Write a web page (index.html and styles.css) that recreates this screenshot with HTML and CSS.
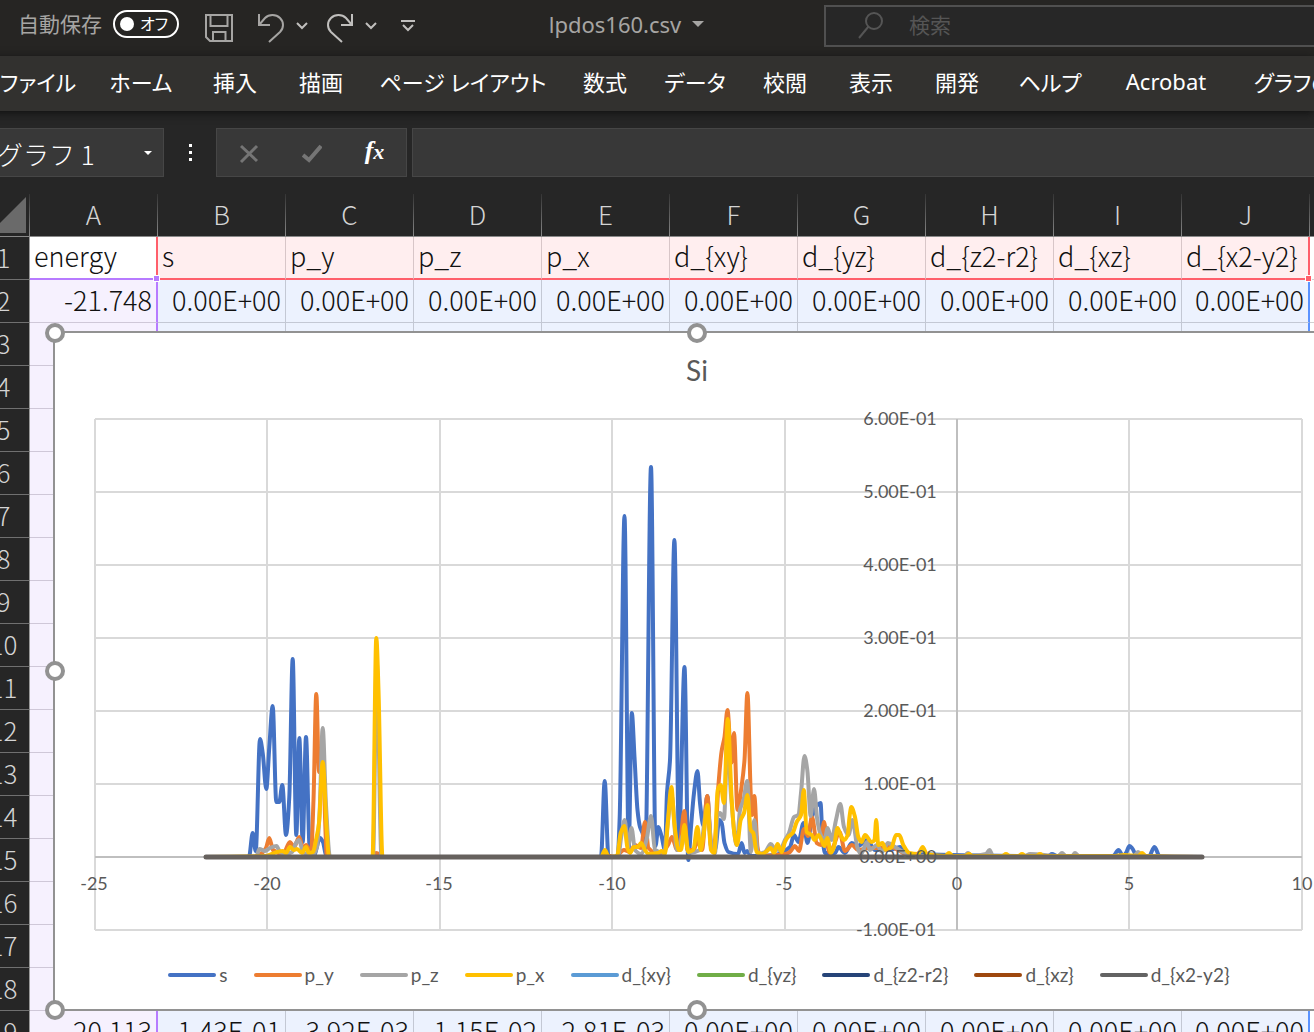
FILE: index.html
```
<!DOCTYPE html>
<html lang="ja">
<head>
    <meta charset="UTF-8">
    <meta name="viewport" content="width=device-width, initial-scale=1.0">
    <title>lpdos160.csv</title>
    <link rel="stylesheet" href="styles.css">
</head>
<body>
    <div class="window">
        <header class="titlebar">
            <div class="quick-access">
                <label class="autosave-label" for="autosave">自動保存</label>
                <button class="toggle" id="autosave" role="switch" aria-checked="false"><span class="knob"></span>オフ</button>
                <button class="icon-btn save" aria-label="上書き保存">
                    <svg width="30" height="30" viewBox="0 0 30 30"><path d="M2 2H28V28H6L2 24ZM6.500 2V13H23.500V2M9 28V19H21.500V28"/></svg>
                </button>
                <button class="icon-btn undo" aria-label="元に戻す">
                    <svg width="28" height="30" viewBox="0 0 28 30"><path d="M2 1V12H13M2 12L8 5C12 1 19 1 23 5C27 9 27 15 23 19L12 29"/></svg>
                </button>
                <button class="icon-btn chevron" aria-label="元に戻す一覧">
                    <svg width="12" height="8" viewBox="0 0 12 8"><path d="M1 1L6 6L11 1"/></svg>
                </button>
                <button class="icon-btn redo" aria-label="やり直し">
                    <svg width="28" height="30" viewBox="0 0 28 30"><path d="M26 1V12H15M26 12L20 5C16 1 9 1 5 5C1 9 1 15 5 19L16 29"/></svg>
                </button>
                <button class="icon-btn chevron" aria-label="やり直し一覧">
                    <svg width="12" height="8" viewBox="0 0 12 8"><path d="M1 1L6 6L11 1"/></svg>
                </button>
                <button class="icon-btn customize" aria-label="カスタマイズ">
                    <svg width="14" height="12" viewBox="0 0 14 12"><path d="M0 1H14M2 5L7 10L12 5"/></svg>
                </button>
            </div>
            <button class="doc-title">lpdos160.csv <span class="caret"></span></button>
            <div class="search">
                <svg width="28" height="30" viewBox="0 0 28 30"><circle cx="17" cy="10" r="8"/><path d="M11.500 15.500L2 27"/></svg>
                <input type="text" placeholder="検索" aria-label="検索">
            </div>
        </header>

        <nav class="tabs">
            <button class="file-tab">ファイル</button>
            <button>ホーム</button>
            <button>挿入</button>
            <button>描画</button>
            <button>ページ レイアウト</button>
            <button>数式</button>
            <button>データ</button>
            <button>校閲</button>
            <button>表示</button>
            <button>開発</button>
            <button>ヘルプ</button>
            <button>Acrobat</button>
            <button class="context-tab">グラフのデザイン</button>
        </nav>

        <div class="formula-bar">
            <div class="name-box">
                <input type="text" value="グラフ 1" aria-label="名前ボックス">
                <span class="caret small"></span>
            </div>
            <div class="dots"><span></span><span></span><span></span></div>
            <div class="formula-buttons">
                <button aria-label="キャンセル"><svg width="20" height="20" viewBox="0 0 20 20"><path d="M2 2L18 17M18 2L2 18"/></svg></button>
                <button aria-label="入力"><svg width="20" height="20" viewBox="0 0 20 20"><path class="check" d="M1 11L7 16L19 2"/></svg></button>
                <button class="fx" aria-label="関数の挿入">f<span>x</span></button>
            </div>
            <input class="formula-input" type="text" aria-label="数式バー">
        </div>

        <main class="sheet">
            <table>
                <colgroup>
                    <col class="row-col">
                    <col span="11">
                </colgroup>
                <thead>
                    <tr>
                        <th class="corner"><svg width="36" height="36" viewBox="0 0 36 36"><path d="M36 0V36H0Z"/></svg></th>
                        <th>A</th><th>B</th><th>C</th><th>D</th><th>E</th><th>F</th><th>G</th><th>H</th><th>I</th><th>J</th><th></th>
                    </tr>
                </thead>
                <tbody>
                    <tr class="names">
                        <th>1</th>
                        <td class="first">energy<span class="grip purple"></span></td>
                        <td>s</td><td>p_y</td><td>p_z</td><td>p_x</td><td>d_{xy}</td><td>d_{yz}</td><td>d_{z2-r2}</td><td>d_{xz}</td>
                        <td class="last">d_{x2-y2}<span class="grip red"></span></td>
                        <td class="plain"></td>
                    </tr>
                    <tr>
                        <th>2</th>
                        <td class="first">-21.748</td>
                        <td>0.00E+00</td><td>0.00E+00</td><td>0.00E+00</td><td>0.00E+00</td><td>0.00E+00</td><td>0.00E+00</td><td>0.00E+00</td><td>0.00E+00</td>
                        <td class="last">0.00E+00</td>
                        <td class="plain"></td>
                    </tr>
                    <tr>
                        <th>3</th>
                        <td class="first"></td>
                        <td></td><td></td><td></td><td></td><td></td><td></td><td></td><td></td>
                        <td class="last"></td>
                        <td class="plain"></td>
                    </tr>
                    <tr><th>4</th><td class="first"></td><td colspan="10"></td></tr>
                    <tr><th>5</th><td class="first"></td><td colspan="10"></td></tr>
                    <tr><th>6</th><td class="first"></td><td colspan="10"></td></tr>
                    <tr><th>7</th><td class="first"></td><td colspan="10"></td></tr>
                    <tr><th>8</th><td class="first"></td><td colspan="10"></td></tr>
                    <tr><th>9</th><td class="first"></td><td colspan="10"></td></tr>
                    <tr><th>10</th><td class="first"></td><td colspan="10"></td></tr>
                    <tr><th>11</th><td class="first"></td><td colspan="10"></td></tr>
                    <tr><th>12</th><td class="first"></td><td colspan="10"></td></tr>
                    <tr><th>13</th><td class="first"></td><td colspan="10"></td></tr>
                    <tr><th>14</th><td class="first"></td><td colspan="10"></td></tr>
                    <tr><th>15</th><td class="first"></td><td colspan="10"></td></tr>
                    <tr><th>16</th><td class="first"></td><td colspan="10"></td></tr>
                    <tr><th>17</th><td class="first"></td><td colspan="10"></td></tr>
                    <tr><th>18</th><td class="first"></td><td colspan="10"></td></tr>
                    <tr>
                        <th>19</th>
                        <td class="first">-20.113</td>
                        <td>1.43E-01</td><td>3.92E-03</td><td>1.15E-02</td><td>2.81E-03</td><td>0.00E+00</td><td>0.00E+00</td><td>0.00E+00</td><td>0.00E+00</td>
                        <td class="last">0.00E+00</td>
                        <td class="plain"></td>
                    </tr>
                </tbody>
            </table>

            <section class="chart">
                <h2>Si</h2>
                <svg class="plot" width="1282" height="560" viewBox="56 392 1282 560">
                    <path class="gridlines" d="M95 419H1302M95 492H1302M95 565H1302M95 638H1302M95 711H1302M95 784H1302M95 930H1302M95 419V930M267 419V930M440 419V930M612 419V930M785 419V930M1129 419V930M1302 419V930"/>
                    <path class="axes" d="M95 857H1302M957 419V930"/>

                    <!-- curves, smoothed by script.js -->
                    <path class="series s" data-points="206,857 249,857 252.7,833 255.7,851 260,739 262.7,753 266.3,789 269.3,747 272.7,706 276.3,802 279.3,802 282.3,785 286,835 289.3,797 292.7,659 296.3,835 299.3,738 302.7,842 306,737 309.7,851 314,855 320,838 323,842 326,855 330,857 601,857 604.7,781 608.5,857 617.5,857 619.7,817 624.5,516 628.7,848 631.8,713 634.5,757 637.5,810 640,827 642.5,833 645.5,848 651,467 655.5,846 658.3,827 661.5,836 665,850 667,793 670,760 674.4,540 679,842 684.5,667 688.3,860 691,827 694,793 697.5,771 700,803 703.5,826 707.3,796 711,847 715,850 719.3,820 721.7,823 724.5,843 728.5,852 738,854 741.7,843 744.5,853 747.3,851 751,856 775,855 790,847 794,835 798.5,842 803.5,823 807.5,843 812,817 817.3,805 820.5,803 822.5,837 825,853 835,853 838.5,847 845,853 851.7,843 858,846 867,840 875,850 890,850 900,847 908,854 1048,856 1052,854 1057,856 1113,856 1118.5,850 1123,856 1126,853 1129.5,846 1132,848 1137,856 1149,856 1154.5,847 1160,857 1200,857"/>
                    <path class="series p-y" data-points="206,857 255,857 263,852 266,848 269.3,838 273,850 283,854 290,842 294,847 299.3,837 303,849 306,845 311,853 313.5,800 316.3,694 319,772 322.7,765 327,857 372,857 376,853 384,857 601,857 604,855 615,857 624,850 630,852 635,845 641,848 645,822 648.5,848 660,855 668,845 672,837 677,850 680,843 684.3,811 687.5,850 694,850 697,840 702,850 707.3,796 711.5,848 715,840 718.3,787 721.5,752 724.5,737 727.5,710 731.5,763 734,733 737.5,810 741.5,787 744.5,760 747.4,693 750.7,793 752,815 754.3,796 757.5,847 760,856 785,854 790,852 795,846 799,851 804,829 808,836 812,817 816.7,843 821,845 824,822 827,843 830,853 834,845 839.5,832 845,851 852,845 858,850 870,848 880,848 888,846 898,850 910,856 1200,857"/>
                    <path class="series p-z" data-points="206,857 256,857 259.5,849 265,851 270,848 276.5,846 280,852 286,854 292,852 296,843 299,840 303,852 312,856 317,847 319.5,815 322.7,728 326,805 330,857 373,857 376.7,662 381.5,857 618,857 621.5,835 624.7,820 628,847 631.5,828 635,850 641,854 646.5,840 651,816 655,850 664,853 667,830 671.7,796 677,850 684.3,833 689,853 700,850 707.3,807 711.5,845 715,853 717.3,817 720,813 724,819 727.5,735 731,795 736.7,845 740,810 743.5,800 747.2,781 750.9,852 754.3,820 758,854 765,852 770.7,844 775,849 780,850 785,840 789,833 794,817 798.3,815 801,793 804.5,756 807.3,770 810.7,816 814,789 817.3,820 820.7,835 824.5,840 827.7,828 831.5,840 836,820 840.3,804 844,827 848.5,835 852.5,820 857.5,848 861,854 867,842 870,850 877,845 882,852 888,843 895,847 903,852 920,856 964,856 968,853 972,856 986,854 989.5,850 993,856 1025,856 1030,854 1058,856 1062,853 1066,856 1072,856 1075,853 1079,856 1134,856 1138,852 1143,856 1200,857"/>
                    <path class="series p-x" data-points="206,857 265,856 272,854 277,852 283,851 286,853 290,847 294,850 297,849 302,853 306,847 309,853 313,852 316,840 319,823 322.7,762 326.7,830 329,857 372.5,857 376.3,638 378.5,690 382.5,857 601,857 605,850 608.5,857 617,856 620.7,833 624.3,826 627.5,848 630,853 634,847 638,847 641,843 645,850 648.5,854 658,853 661.7,851 665,854 668,820 671.4,787 674.3,823 678.7,850 681,850 684.4,825 688.3,852 693.3,850 697.4,827 700.7,850 703.3,837 707.4,805 711,850 714.3,853 717.7,790 720.7,785 724,803 727.7,719 731.7,800 734.3,833 737,845 740.7,820 744,813 747.4,795 750.7,830 753.3,833 756.7,852 762,854 767,851 770.7,848 774,853 777.5,844 781.7,852 785,842 788,837 792.7,833 796.7,822 801,815 803.8,790 806.7,832 811.7,835 814.5,840 818.3,835 821.5,840 824.3,846 827.3,838 831,853 834,847 837.5,828 840.5,835 844,840 847.7,835 849.5,817 851.3,807 855,817 858.3,837 861.5,842 865,835 871.7,842 874.5,840 876.2,820 878.3,845 882.5,843 886,850 891.7,847 896,835 899.3,835 903.3,845 909.3,853 918,854 922.7,847 926.7,854 945,856 949,853 953,856 965,856 969,854 973,856 1002,856 1006,854 1010,856 1018,856 1022,854 1026,856 1036,856 1040,854 1044,856 1115,856 1124,855 1138,856 1142,853 1146,856 1200,857"/>
                    <!-- the five d series all sit on zero, the last one covers the rest -->
                    <path class="series d-x2y2" data-points="206,857 1202,857"/>

                    <g class="labels">
                        <text x="900" y="425">6.00E-01</text>
                        <text x="900" y="498">5.00E-01</text>
                        <text x="900" y="571">4.00E-01</text>
                        <text x="900" y="644">3.00E-01</text>
                        <text x="900" y="717">2.00E-01</text>
                        <text x="900" y="790">1.00E-01</text>
                        <text x="898" y="863">0.00E+00</text>
                        <text x="896" y="936">-1.00E-01</text>
                        <text x="94" y="890">-25</text>
                        <text x="267" y="890">-20</text>
                        <text x="439" y="890">-15</text>
                        <text x="612" y="890">-10</text>
                        <text x="784" y="890">-5</text>
                        <text x="957" y="890">0</text>
                        <text x="1129" y="890">5</text>
                        <text x="1302" y="890">10</text>
                    </g>
                </svg>
                <ul class="legend">
                    <li class="s">s</li>
                    <li class="p-y">p_y</li>
                    <li class="p-z">p_z</li>
                    <li class="p-x">p_x</li>
                    <li class="d-xy">d_{xy}</li>
                    <li class="d-yz">d_{yz}</li>
                    <li class="d-z2r2">d_{z2-r2}</li>
                    <li class="d-xz">d_{xz}</li>
                    <li class="d-x2y2">d_{x2-y2}</li>
                </ul>
                <span class="handle top left"></span>
                <span class="handle top center"></span>
                <span class="handle middle left"></span>
                <span class="handle bottom left"></span>
                <span class="handle bottom center"></span>
            </section>
        </main>
    </div>
    <script src="script.js"></script>
</body>
</html>
```

FILE: styles.css
```
* {
    box-sizing: border-box;
}
body {
    margin: 0;
    height: 100vh;
    overflow: hidden;
    background: #262626;
    font-family: "Noto Sans", "Noto Sans CJK JP", sans-serif;
}
button, input {
    font: inherit;
    color: inherit;
    background: none;
    border: none;
    padding: 0;
    margin: 0;
    outline: none;
}
/* the window is pushed a little past the left edge of the screen */
.window {
    margin-left: -22px;
}

/* title bar */
.titlebar {
    display: flex;
    height: 56px;
    padding-left: 40px;
    background: #262523;
    color: #a6a5a3;
    font-size: 21px;
}
.quick-access {
    display: flex;
    align-items: center;
    height: 52px;
}
.autosave-label {
    line-height: 28px;
    margin: 0 11px 4px 0;
}
.toggle {
    display: flex;
    align-items: center;
    justify-content: space-between;
    width: 66px;
    height: 28px;
    margin-bottom: 4px;
    padding: 0 9px 0 5px;
    border: 2px solid #fff;
    border-radius: 14px;
    color: #fff;
    font-size: 16px;
    line-height: 20px;
    font-feature-settings: "palt";
}
.knob {
    width: 14px;
    height: 14px;
    border-radius: 50%;
    background: #fff;
}
.icon-btn {
    display: flex;
}
.icon-btn svg {
    fill: none;
    stroke: #a6a5a3;
    stroke-width: 2;
}
.icon-btn.chevron svg, .icon-btn.customize svg, .icon-btn.redo svg {
    stroke: #c0bfbd;
}
.save {
    margin: 4px 0 0 25px;
}
.undo {
    margin: 4px 0 0 23px;
}
.redo {
    margin: 4px 0 0 18px;
}
.chevron {
    margin-left: 11px;
}
.customize {
    margin-left: 24px;
}
.doc-title {
    flex: 1;
    display: flex;
    align-items: center;
    justify-content: center;
    gap: 11px;
    height: 48px;
    padding-left: 14px;
    font-size: 22px;
}
.caret {
    border: 6px solid transparent;
    border-top-color: #a6a5a3;
    border-bottom: none;
}
.search {
    display: flex;
    align-items: center;
    flex: 0 0 490px;
    height: 42px;
    margin-top: 5px;
    padding-left: 31px;
    gap: 24px;
    background: #272727;
    border: 2px solid #505050;
    border-right: none;
}
.search svg {
    fill: none;
    stroke: #555;
    stroke-width: 2;
}
.search input {
    padding-bottom: 2px;
}
.search input::placeholder {
    color: #555;
    opacity: 1;
}

/* ribbon tabs */
.tabs {
    display: grid;
    grid-template-columns: 112px 102px 86px 86px 198px 86px 94px 86px 86px 86px 100px 132px 220px;
    height: 55px;
    background: #32312f;
    box-shadow: 0 2px 8px #111;
    position: relative;
    color: #fff;
    font-size: 22px;
    font-feature-settings: "palt";
}
.tabs button {
    white-space: nowrap;
    height: 50px;
}
.tabs .file-tab {
    text-align: left;
    padding-left: 22px;
}
.tabs .context-tab {
    text-align: left;
    padding-left: 22px;
}

/* formula bar */
.formula-bar {
    display: flex;
    height: 83px;
    padding: 17px 0;
    font-family: "Noto Sans CJK JP", sans-serif;
    font-size: 26px;
    color: #fff;
}
.name-box {
    display: flex;
    align-items: center;
    width: 186px;
    padding: 0 11px 0 18px;
    background: #383838;
    border: 1px solid #464646;
}
.name-box input {
    width: 100%;
    padding-top: 2px;
    font-weight: 300;
}
.caret.small {
    border-width: 4px;
    border-bottom: none;
    border-top-color: #fff;
}
.dots {
    display: flex;
    flex-direction: column;
    align-items: center;
    justify-content: center;
    gap: 4px;
    width: 52px;
}
.dots span {
    width: 3px;
    height: 3px;
    background: #fff;
}
.formula-buttons {
    display: flex;
    align-items: center;
    width: 191px;
    background: #383838;
    border: 1px solid #464646;
}
.formula-buttons button {
    flex: 1;
    height: 47px;
}
.formula-buttons svg {
    fill: none;
    stroke: #757575;
    stroke-width: 3;
}
.formula-buttons .check {
    stroke-width: 4;
}
.formula-buttons .fx {
    font-family: "Liberation Serif", serif;
    font-style: italic;
    font-weight: bold;
    padding-bottom: 4px;
}
.fx span {
    font-size: 22px;
}
.formula-input {
    flex: 1;
    margin-left: 5px;
    background: #383838;
    border: 1px solid #464646;
    border-right: none;
}

/* cells */
.sheet {
    position: relative;
}
table {
    table-layout: fixed;
    width: 1460px;
    border-spacing: 0;
    font-family: "Noto Sans CJK JP", sans-serif;
    font-size: 27px;
    font-weight: 300;
    line-height: 36px;
}
.row-col {
    width: 52px;
}
th, td {
    height: 43px;
    padding: 0 4px 3px;
    white-space: nowrap;
}
th {
    font-weight: 300;
    font-size: 26px;
    color: #d4d4d4;
    background: #262626;
}
thead th {
    border-bottom: 1px solid #9a9a9a;
    border-right: 1px solid;
    border-image: linear-gradient(#333, #8a8a8a) 1;
}
thead .corner {
    text-align: right;
    padding: 0 3px 0 0;
    line-height: 0;
}
.corner svg {
    fill: #6a6a6a;
}
tbody th {
    padding: 0 0 3px;
    border-bottom: 1px solid #707070;
    border-right: 1px solid #9a9a9a;
}
td {
    position: relative;
    text-align: right;
    color: #111;
    background: #ecf2fe;
    border-right: 1px solid #c3c8d4;
    border-bottom: 1px solid #c3c8d4;
}
td.first {
    background: #f6f1fe;
    border-right: 2px solid #b77bff;
    border-bottom-color: #cfc8d8;
}
td.last {
    border-right: 2px solid #5b93ff;
}
.names td {
    text-align: left;
    background: #ffeeef;
    border-right-color: #d8c6c8;
    border-bottom: 2px solid #ff5f6b;
}
.names .first {
    background: #fff;
    border-right-color: #ff5f6b;
    border-bottom-color: #b77bff;
}
.names .last {
    border-right-color: #ff5f6b;
}
td.plain, .names .plain {
    background: #fff;
    border-bottom: 1px solid #d0d0d0;
}
.grip {
    position: absolute;
    right: -4px;
    bottom: -4px;
    width: 7px;
    height: 7px;
    border: 1px solid #fff;
    z-index: 1;
}
.grip.purple {
    background: #b77bff;
}
.grip.red {
    background: #ff5f6b;
}

/* series colours, shared by the curves and the legend */
.s { color: #4472c4; }
.p-y { color: #ed7d31; }
.p-z { color: #a5a5a5; }
.p-x { color: #ffc000; }
.d-xy { color: #5b9bd5; }
.d-yz { color: #70ad47; }
.d-z2r2 { color: #264478; }
.d-xz { color: #9e480e; }
.d-x2y2 { color: #636363; }

/* chart floating over the cells */
.chart {
    position: absolute;
    top: 137px;
    left: 75px;
    width: 1287px;
    padding: 17px 0 12px 1px;
    background: #fff;
    border: 2px solid #929292;
    font-family: Lato, sans-serif;
    z-index: 2;
}
.chart h2 {
    margin: 0;
    padding-bottom: 2px;
    text-align: center;
    font-size: 28px;
    font-weight: 400;
    line-height: 40px;
    color: #595959;
}
.plot {
    display: block;
}
.gridlines, .axes {
    fill: none;
    stroke: #d9d9d9;
    stroke-width: 2;
}
.axes {
    stroke: #bfbfbf;
}
.series {
    fill: none;
    stroke: currentColor;
    stroke-width: 4;
    stroke-linejoin: round;
    stroke-linecap: round;
}
.series.d-x2y2 {
    color: #66615e;
    stroke-width: 5;
}
.labels {
    fill: #595959;
    font-size: 18px;
    text-anchor: middle;
}
.legend {
    display: flex;
    justify-content: center;
    gap: 26px;
    height: 45px;
    margin: 0;
    padding: 0 0 0 4px;
    list-style: none;
    font-size: 19px;
    line-height: 45px;
    -webkit-text-fill-color: #595959;
}
.legend li {
    display: flex;
    align-items: center;
    gap: 3px;
}
.legend li::before {
    content: "";
    width: 48px;
    height: 4px;
    border-radius: 2px;
    background: currentColor;
}
.handle {
    position: absolute;
    width: 20px;
    height: 20px;
    border: 4px solid #929292;
    border-radius: 50%;
    background: #fff;
}
.handle.top { top: -10px; }
.handle.middle { top: calc(50% - 10px); }
.handle.bottom { bottom: -11px; }
.handle.left { left: -10px; }
.handle.center { left: calc(50% - 10px); }
```

FILE: script.js
```
// Draw each series as a smoothed line that flattens out at its peaks and dips
function smoothPath(points) {
    const slope = points.map((p, i) => {
        const a = points[i - 1];
        const b = points[i + 1];
        if (!a || !b) return 0;
        const left = (p[1] - a[1]) / (p[0] - a[0]);
        const right = (b[1] - p[1]) / (b[0] - p[0]);
        if (left * right <= 0) return 0;
        return 2 * left * right / (left + right);
    });

    let d = `M${points[0]}`;
    for (let i = 1; i < points.length; i++) {
        const [x0, y0] = points[i - 1];
        const [x1, y1] = points[i];
        const dx = (x1 - x0) / 3;
        d += `C${x0 + dx},${y0 + slope[i - 1] * dx} ${x1 - dx},${y1 - slope[i] * dx} ${x1},${y1}`;
    }
    return d;
}

document.querySelectorAll('.series').forEach(path => {
    const points = path.dataset.points.split(' ').map(p => p.split(',').map(Number));
    path.setAttribute('d', smoothPath(points));
});
```
